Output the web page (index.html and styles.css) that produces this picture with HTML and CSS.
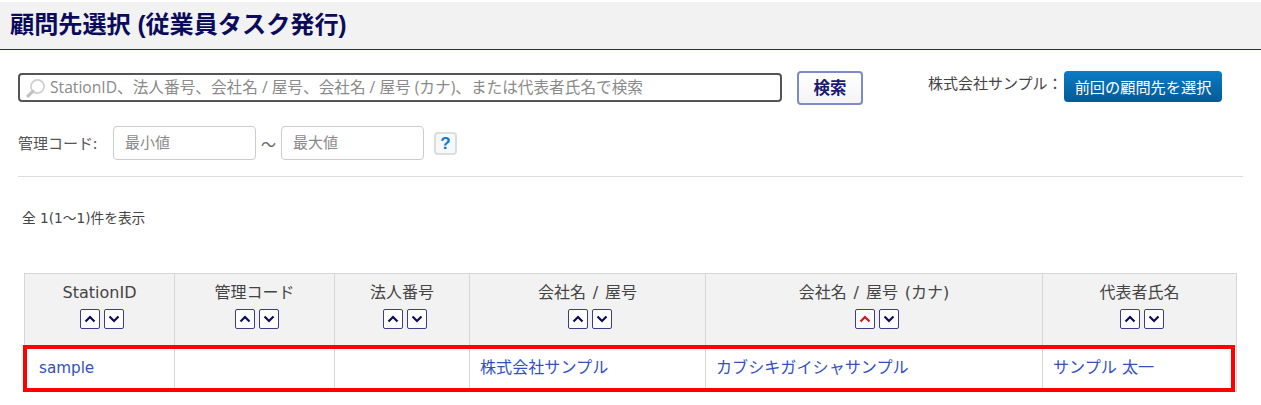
FILE: index.html
```html
<!DOCTYPE html>
<html lang="ja">
<head>
<meta charset="utf-8">
<title>顧問先選択</title>
<link rel="stylesheet" href="styles.css">
</head>
<body>
<header class="title-bar"><h1>顧問先選択 (従業員タスク発行)</h1></header>
<main class="content">
  <div class="search-row">
    <div class="search-box">
      <svg class="search-icon" width="24" height="20" viewBox="0 0 24 20"><circle cx="14.500" cy="8.500" r="6.600" fill="#fff" stroke="#cfcfcf" stroke-width="1.700"/><path d="M9.800 13.300 5 18" stroke="#c2c2c2" stroke-width="3.200" stroke-linecap="round"/></svg>
      <input class="search-input" type="text" placeholder="StationID、法人番号、会社名 / 屋号、会社名 / 屋号 (カナ)、または代表者氏名で検索">
    </div>
    <button class="search-btn" type="button">検索</button>
    <div class="prev">
      <span class="prev-label">株式会社サンプル：</span>
      <button class="prev-btn" type="button">前回の顧問先を選択</button>
    </div>
  </div>
  <div class="filter-row">
    <span class="filter-label">管理コード:</span>
    <input class="range" type="text" placeholder="最小値">
    <span class="tilde">～</span>
    <input class="range" type="text" placeholder="最大値">
    <span class="help">?</span>
  </div>
  <p class="count">全 1(1～1)件を表示</p>
  <div class="table-wrap">
    <table class="grid">
      <colgroup>
        <col class="c1"><col class="c2"><col class="c3"><col class="c4"><col class="c5"><col class="c6">
      </colgroup>
      <thead>
        <tr>
          <th>StationID<div class="sort"><span class="sort-btn"><svg viewBox="0 0 12 8"><path d="M1.500 6.500 6 2l4.500 4.500"/></svg></span><span class="sort-btn"><svg viewBox="0 0 12 8"><path d="M1.500 1.500 6 6l4.500-4.500"/></svg></span></div></th>
          <th>管理コード<div class="sort"><span class="sort-btn"><svg viewBox="0 0 12 8"><path d="M1.500 6.500 6 2l4.500 4.500"/></svg></span><span class="sort-btn"><svg viewBox="0 0 12 8"><path d="M1.500 1.500 6 6l4.500-4.500"/></svg></span></div></th>
          <th>法人番号<div class="sort"><span class="sort-btn"><svg viewBox="0 0 12 8"><path d="M1.500 6.500 6 2l4.500 4.500"/></svg></span><span class="sort-btn"><svg viewBox="0 0 12 8"><path d="M1.500 1.500 6 6l4.500-4.500"/></svg></span></div></th>
          <th>会社名 / 屋号<div class="sort"><span class="sort-btn"><svg viewBox="0 0 12 8"><path d="M1.500 6.500 6 2l4.500 4.500"/></svg></span><span class="sort-btn"><svg viewBox="0 0 12 8"><path d="M1.500 1.500 6 6l4.500-4.500"/></svg></span></div></th>
          <th>会社名 / 屋号 (カナ)<div class="sort"><span class="sort-btn active"><svg viewBox="0 0 12 8"><path d="M1.500 6.500 6 2l4.500 4.500"/></svg></span><span class="sort-btn"><svg viewBox="0 0 12 8"><path d="M1.500 1.500 6 6l4.500-4.500"/></svg></span></div></th>
          <th>代表者氏名<div class="sort"><span class="sort-btn"><svg viewBox="0 0 12 8"><path d="M1.500 6.500 6 2l4.500 4.500"/></svg></span><span class="sort-btn"><svg viewBox="0 0 12 8"><path d="M1.500 1.500 6 6l4.500-4.500"/></svg></span></div></th>
        </tr>
      </thead>
      <tbody>
        <tr>
          <td class="id-cell"><a href="#">sample</a></td>
          <td></td>
          <td></td>
          <td><a href="#">株式会社サンプル</a></td>
          <td><a href="#">カブシキガイシャサンプル</a></td>
          <td><a href="#">サンプル 太一</a></td>
        </tr>
      </tbody>
    </table>
    <div class="highlight"></div>
  </div>
</main>
</body>
</html>
```
FILE: styles.css
```css
* { box-sizing: border-box; }
html, body { margin: 0; padding: 0; }
body {
  background: #fff;
  color: #444;
  font-family: "DejaVu Sans", "Noto Sans CJK JP", sans-serif;
  font-size: 14px;
  height: 405px;
  overflow: hidden;
}
.title-bar {
  margin-top: 2px;
  height: 48px;
  background: #f2f2f2;
  border-bottom: 1px solid #2a2a60;
  padding-left: 10px;
  display: flex;
  align-items: center;
}
.title-bar h1 {
  margin: 0;
  font-family: "Liberation Sans", "Noto Sans CJK JP", sans-serif;
  font-size: 24.150px;
  font-weight: 700;
  color: #0b0b5c;
  line-height: 1;
}
.content { padding: 0 18px; }
.search-row {
  display: flex;
  align-items: flex-start;
  padding-top: 23px;
  height: 75px;
}
.search-box {
  width: 764px;
  height: 29px;
  border: 2px solid #555;
  border-radius: 4px;
  display: flex;
  align-items: center;
  padding-left: 3px;
  background: #fff;
}
.search-icon { flex: none; }
.search-input {
  flex: 1;
  border: 0;
  outline: 0;
  background: transparent;
  margin-left: 3px;
  padding: 0 0 2px;
  font: 15.650px "Open Sans", "Noto Sans CJK JP", sans-serif;
  color: #444;
}
.search-input::placeholder, .range::placeholder { color: #8a8a8a; opacity: 1; }
.search-btn {
  margin-left: 15px;
  margin-top: -2px;
  width: 66px;
  height: 34px;
  border: 2px solid #7d8bcd;
  border-radius: 4px;
  background: linear-gradient(#fff, #f4f4f4);
  color: #1a1a70;
  font: 700 16.500px "Noto Sans CJK JP", sans-serif;
  padding: 0 0 2px;
}
.prev {
  margin-left: 65px;
  display: flex;
  align-items: flex-start;
}
.prev-label {
  font: 15px/24px "Noto Sans CJK JP", sans-serif;
  color: #444;
  margin-top: -2px;
  width: 136px;
  white-space: nowrap;
}
.prev-btn {
  margin-top: -2px;
  width: 158px;
  height: 31px;
  border: 0;
  border-radius: 4px;
  background: linear-gradient(#0a7cc6, #045a98);
  color: #fff;
  font: 15.200px "Noto Sans CJK JP", sans-serif;
  padding: 0 0 2px;
}
.filter-row {
  display: flex;
  align-items: center;
  height: 36px;
}
.filter-label {
  width: 95px;
  padding-bottom: 2px;
  font: 15px "Noto Sans CJK JP", sans-serif;
  color: #555;
}
.range {
  width: 143px;
  height: 34px;
  border: 1px solid #ccc;
  border-radius: 4px;
  padding: 0 11px 4px;
  font: 15px "Noto Sans CJK JP", sans-serif;
  outline: 0;
}
.tilde {
  width: 25px;
  text-align: center;
  color: #666;
  font: 15px "Noto Sans CJK JP", sans-serif;
}
.help {
  margin-left: 10px;
  margin-top: 1px;
  width: 23px;
  height: 23px;
  border: 2px solid #ddd;
  border-radius: 4px;
  background: #f5f9fc;
  color: #0f78c8;
  font: 700 17px/19px "Liberation Sans", sans-serif;
  text-align: center;
}
.count {
  margin: 15px 0 0;
  padding: 32px 0 0 4px;
  border-top: 1px solid #ddd;
  height: 97px;
  width: 1225px;
  font: 13.700px/18px "DejaVu Sans", "Noto Sans CJK JP", sans-serif;
  color: #444;
}
.table-wrap { position: relative; margin-left: 6px; width: 1212px; }
.grid {
  width: 1212px;
  table-layout: fixed;
  border-collapse: collapse;
}
.c1 { width: 150px; }
.c2 { width: 160px; }
.c3 { width: 135px; }
.c4 { width: 236px; }
.c5 { width: 337px; }
.c6 { width: 194px; }
.grid th {
  height: 73px;
  background: #f2f2f2;
  border: 1px solid #d6d6d6;
  font: 400 16px/20px "DejaVu Sans", "Noto Sans CJK JP", sans-serif;
  word-spacing: 1.800px;
  color: #444;
  text-align: center;
  vertical-align: top;
  padding: 9px 0 0;
}
.sort {
  display: flex;
  justify-content: center;
  gap: 4px;
  margin-top: 6px;
  padding-left: 5px;
}
.sort-btn {
  width: 20px;
  height: 20px;
  border: 1px solid #3c3c90;
  border-radius: 2px;
  background: #fff;
  display: flex;
  align-items: center;
  justify-content: center;
}
.sort-btn svg {
  width: 12px;
  height: 8px;
  fill: none;
  stroke: #0d0d5c;
  stroke-width: 2.200;
}
.sort-btn.active svg { stroke: #d8141e; }
.grid td {
  height: 45px;
  border: 1px solid #d6d6d6;
  padding: 0 10px 6px;
  font-size: 16.100px;
  vertical-align: middle;
  white-space: nowrap;
}
.grid .id-cell { padding: 0 14px 2px; font-size: 15.200px; }
.grid a {
  color: #3350c0;
  text-decoration: none;
  font-family: "DejaVu Sans", "Noto Sans CJK JP", sans-serif;
}
.highlight {
  position: absolute;
  left: -1px;
  top: 72px;
  width: 1212px;
  height: 47px;
  border: 4px solid #f00;
  pointer-events: none;
}
```
